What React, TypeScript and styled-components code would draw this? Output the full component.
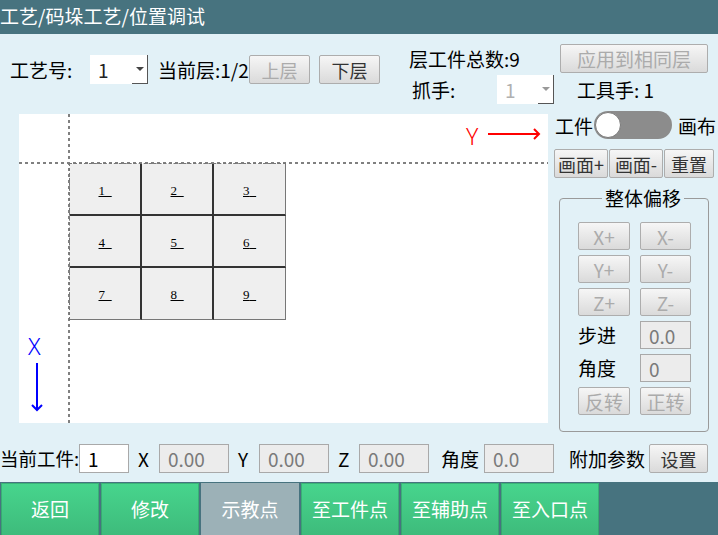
import React from "react";
import styled, { createGlobalStyle } from "styled-components";

const Global = createGlobalStyle`
  html, body { margin: 0; padding: 0; }
  body {
    width: 718px; height: 535px; overflow: hidden;
    background: #e2f1f7;
    font-family: "Noto Sans CJK SC", "Noto Sans", sans-serif;
  }
  * { box-sizing: border-box; }
`;

const Screen = styled.div`
  width: 718px;
  height: 535px;
  display: flex;
  flex-direction: column;
  background: #e2f1f7;
  overflow: hidden;
`;

const TitleBar = styled.div`
  height: 34px;
  flex: none;
  background: #47737f;
  color: #fff;
  font-size: 19px;
  line-height: 32px;
  white-space: nowrap;
`;

const TopSection = styled.div`
  height: 77px;
  flex: none;
  display: flex;
  padding-top: 10px;
`;

const LeftGroup = styled.div`
  display: flex;
  align-items: center;
  height: 29px;
  margin-top: 11px;
  padding-left: 10px;
`;

const RightBlock = styled.div`
  display: flex;
  flex-direction: column;
  gap: 2px;
  margin-left: 29px;
`;

const Row = styled.div<{ $pl?: number }>`
  display: flex;
  align-items: center;
  height: 29px;
  padding-left: ${(p) => p.$pl ?? 0}px;
`;

const Label = styled.span<{ $w?: number; $ml?: number; $size?: number }>`
  display: inline-block;
  flex: none;
  ${(p) => (p.$w ? `width: ${p.$w}px;` : "")}
  margin-left: ${(p) => p.$ml ?? 0}px;
  font-size: ${(p) => p.$size ?? 19}px;
  line-height: 29px;
  color: #000;
  white-space: nowrap;
`;

const SelectBox = styled.div<{ $w: number; $disabled?: boolean }>`
  width: ${(p) => p.$w}px;
  height: 29px;
  flex: none;
  background: #fff;
  display: flex;
  align-items: center;
  padding-left: 8px;
  font-size: 19px;
  color: ${(p) => (p.$disabled ? "#b0b0b0" : "#222")};
`;

const SelectArrow = styled.span<{ $disabled?: boolean }>`
  margin-left: auto;
  width: 16px;
  height: 100%;
  display: flex;
  align-items: center;
  justify-content: center;
  border-right: 1px solid #555;
  border-bottom: 1px solid #555;
  &::after {
    content: "";
    border-left: 4px solid transparent;
    border-right: 4px solid transparent;
    border-top: 4px solid ${(p) => (p.$disabled ? "#999" : "#444")};
  }
`;

const Btn = styled.button<{ $w: number; $ml?: number; $size?: number }>`
  width: ${(p) => p.$w}px;
  height: 29px;
  flex: none;
  margin-left: ${(p) => p.$ml ?? 0}px;
  padding: 0;
  border: 1px solid #adadad;
  border-radius: 2px;
  background: linear-gradient(#f6f6f6, #dadada);
  font-family: "Noto Sans CJK SC", "Noto Sans", sans-serif;
  font-size: ${(p) => p.$size ?? 18}px;
  line-height: 1;
  color: #333;
  white-space: nowrap;
  &:disabled { color: #ababab; }
`;

const Middle = styled.div`
  height: 321px;
  flex: none;
  display: flex;
`;

const Canvas = styled.div`
  position: relative;
  width: 529px;
  height: 309px;
  margin: 3px 0 0 19px;
  background: #fff;
  flex: none;
`;

const Overlay = styled.svg`
  position: absolute;
  left: 0;
  top: 0;
`;

const AxisLetter = styled.span<{ $color: string; $x: number; $y: number }>`
  position: absolute;
  left: ${(p) => p.$x}px;
  top: ${(p) => p.$y}px;
  color: ${(p) => p.$color};
  font-family: "Noto Sans", sans-serif;
  font-size: 23px;
  font-weight: 300;
  line-height: 1;
`;

const PartGrid = styled.div`
  position: absolute;
  left: 50px;
  top: 49px;
  display: grid;
  grid-template-columns: repeat(3, 72px);
  grid-template-rows: repeat(3, 52px);
  border-top: 1px dashed #777;
  border-left: 1px dashed #777;
`;

const Cell = styled.div`
  background: #efefef;
  border-right: 2px solid #333;
  border-bottom: 2px solid #333;
  display: flex;
  align-items: center;
  justify-content: center;
  padding-top: 3px;
  font-family: "Liberation Serif", serif;
  font-size: 13px;
  color: #000;
  &:nth-child(3n) { border-right-color: #777; border-right-width: 1px; }
  &:nth-child(n + 7) { border-bottom-color: #777; border-bottom-width: 1px; }
`;

const CellNum = styled.span`
  text-decoration: underline;
`;

const RightPanel = styled.div`
  width: 162px;
  margin-left: 6px;
  display: flex;
  flex-direction: column;
`;

const ToggleRow = styled.div`
  display: flex;
  align-items: center;
  height: 28px;
`;

const Toggle = styled.div`
  width: 78px;
  height: 28px;
  margin-left: 1px;
  border-radius: 14px;
  background: #8c8c8c;
  display: flex;
  align-items: center;
  padding-left: 1px;
  flex: none;
`;

const Knob = styled.div`
  width: 26px;
  height: 26px;
  border-radius: 50%;
  background: #fff;
  border: 1px solid #7a7a7a;
`;

const ViewBtns = styled.div`
  display: flex;
  gap: 1px;
  margin-top: 10px;
`;

const Group = styled.fieldset`
  margin: 9px 0 0 5px;
  width: 150px;
  height: 245px;
  border: 1px solid #9a9a9a;
  border-radius: 4px;
  padding: 13px 0 0 18px;
`;

const Legend = styled.legend`
  margin: 0 auto;
  padding: 0 3px;
  font-size: 19px;
  line-height: 22px;
  color: #000;
`;

const OffsetGrid = styled.div`
  display: grid;
  grid-template-columns: 52px 51px;
  grid-auto-rows: 28px;
  column-gap: 10px;
  row-gap: 5px;
`;

const GridBtn = styled.button`
  height: 28px;
  padding: 0;
  border: 1px solid #adadad;
  border-radius: 2px;
  background: linear-gradient(#f6f6f6, #dadada);
  font-family: "Noto Sans CJK SC", "Noto Sans", sans-serif;
  font-size: 19px;
  line-height: 1;
  color: #333;
  &:disabled { color: #ababab; }
`;

const GridLabel = styled.span`
  font-size: 19px;
  line-height: 28px;
  color: #000;
`;

const Field = styled.div<{ $w: number; $ml?: number; $h?: number; $gray?: boolean }>`
  width: ${(p) => p.$w}px;
  height: ${(p) => p.$h ?? 29}px;
  margin-left: ${(p) => p.$ml ?? 0}px;
  flex: none;
  display: flex;
  align-items: center;
  padding-left: 8px;
  border: 1px solid #a9a9a9;
  background: ${(p) => (p.$gray ? "#ececec" : "#fff")};
  color: ${(p) => (p.$gray ? "#7a7a7a" : "#000")};
  font-size: 19px;
  font-family: "Noto Sans CJK SC", "Noto Sans", sans-serif;
`;

const BottomRow = styled.div`
  display: flex;
  align-items: center;
  height: 29px;
  margin-top: 12px;
  flex: none;
`;

const Nav = styled.div`
  margin-top: 9px;
  height: 53px;
  flex: none;
  background: #47737f;
  display: flex;
  gap: 2px;
  padding: 1px 0 0 1px;
  overflow: hidden;
`;

const NavBtn = styled.div<{ $active?: boolean }>`
  width: 98px;
  height: 56px;
  flex: none;
  display: flex;
  align-items: center;
  justify-content: center;
  padding-bottom: 5px;
  color: #fff;
  font-size: 19px;
  background: ${(p) =>
    p.$active ? "#9cb1b7" : "linear-gradient(#47d58d, #3db97a)"};
  box-shadow: ${(p) =>
    p.$active ? "none" : "inset 0 0 0 1px rgba(40,140,90,0.45)"};
`;

const cells = ["1", "2", "3", "4", "5", "6", "7", "8", "9"];

export default function App() {
  return (
    <Screen>
      <Global />
      <TitleBar>工艺/码垛工艺/位置调试</TitleBar>
      <TopSection>
        <LeftGroup>
          <Label $w={80}>工艺号:</Label>
          <SelectBox $w={58}>
            1<SelectArrow />
          </SelectBox>
          <Label $w={91} $ml={10}>当前层:1/2</Label>
          <Btn $w={61} disabled>上层</Btn>
          <Btn $w={61} $ml={9}>下层</Btn>
        </LeftGroup>
        <RightBlock>
          <Row>
            <Label $w={151}>层工件总数:9</Label>
            <Btn $w={148} $size={19} disabled>应用到相同层</Btn>
          </Row>
          <Row $pl={3}>
            <Label $w={85}>抓手:</Label>
            <SelectBox $w={57} $disabled>
              1<SelectArrow $disabled />
            </SelectBox>
            <Label $ml={23}>工具手: 1</Label>
          </Row>
        </RightBlock>
      </TopSection>
      <Middle>
        <Canvas>
          <Overlay width="529" height="309" viewBox="0 0 529 309">
            <line x1="50" y1="0" x2="50" y2="309" stroke="#808080" strokeWidth="2" strokeDasharray="3 3" />
            <line x1="0" y1="49" x2="529" y2="49" stroke="#808080" strokeWidth="2" strokeDasharray="3 3" />
            <g stroke="#ff0000" strokeWidth="2" fill="none">
              <line x1="469" y1="20" x2="520" y2="20" />
              <polyline points="515,15 520,20 515,25" />
            </g>
            <g stroke="#0000ff" strokeWidth="2" fill="none">
              <line x1="18" y1="249" x2="18" y2="296" />
              <polyline points="13,291 18,296 23,291" />
            </g>
          </Overlay>
          <AxisLetter $color="#ff0000" $x={447} $y={11}>Y</AxisLetter>
          <AxisLetter $color="#0000ff" $x={9} $y={221}>X</AxisLetter>
          <PartGrid>
            {cells.map((c) => (
              <Cell key={c}>
                <CellNum>{c}_</CellNum>
              </Cell>
            ))}
          </PartGrid>
        </Canvas>
        <RightPanel>
          <ToggleRow>
            <Label $ml={1}>工件</Label>
            <Toggle>
              <Knob />
            </Toggle>
            <Label $ml={6}>画布</Label>
          </ToggleRow>
          <ViewBtns>
            <Btn $w={54} $size={18}>画面+</Btn>
            <Btn $w={54} $size={18}>画面-</Btn>
            <Btn $w={50} $size={18}>重置</Btn>
          </ViewBtns>
          <Group>
            <Legend>整体偏移</Legend>
            <OffsetGrid>
              <GridBtn disabled>X+</GridBtn>
              <GridBtn disabled>X-</GridBtn>
              <GridBtn disabled>Y+</GridBtn>
              <GridBtn disabled>Y-</GridBtn>
              <GridBtn disabled>Z+</GridBtn>
              <GridBtn disabled>Z-</GridBtn>
              <GridLabel>步进</GridLabel>
              <Field $w={51} $h={28} $gray>0.0</Field>
              <GridLabel>角度</GridLabel>
              <Field $w={51} $h={28} $gray>0</Field>
              <GridBtn disabled>反转</GridBtn>
              <GridBtn disabled>正转</GridBtn>
            </OffsetGrid>
          </Group>
        </RightPanel>
      </Middle>
      <BottomRow>
        <Label $w={79} $size={18.5}>当前工件:</Label>
        <Field $w={50}>1</Field>
        <Label $w={21} $ml={9}>X</Label>
        <Field $w={70} $gray>0.00</Field>
        <Label $w={21} $ml={9}>Y</Label>
        <Field $w={70} $gray>0.00</Field>
        <Label $w={21} $ml={9}>Z</Label>
        <Field $w={70} $gray>0.00</Field>
        <Label $w={43} $ml={12}>角度</Label>
        <Field $w={70} $gray>0.0</Field>
        <Label $w={80} $ml={15}>附加参数</Label>
        <Btn $w={59}>设置</Btn>
      </BottomRow>
      <Nav>
        <NavBtn>返回</NavBtn>
        <NavBtn>修改</NavBtn>
        <NavBtn $active>示教点</NavBtn>
        <NavBtn>至工件点</NavBtn>
        <NavBtn>至辅助点</NavBtn>
        <NavBtn>至入口点</NavBtn>
      </Nav>
    </Screen>
  );
}
